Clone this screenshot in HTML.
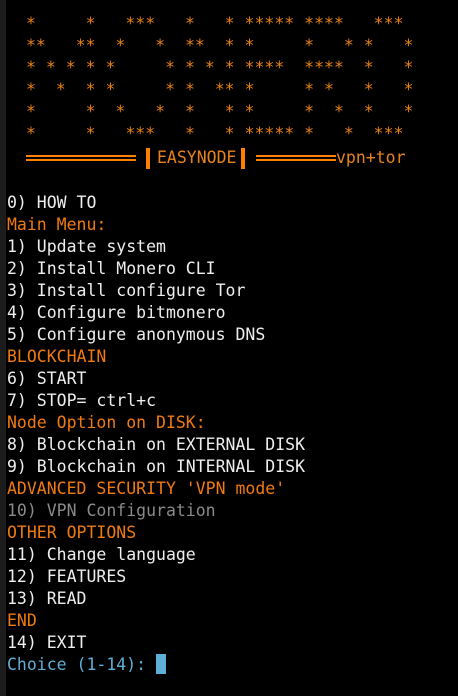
<!DOCTYPE html>
<html><head><meta charset="utf-8"><style>
body{margin:0;width:458px;height:696px;background:#000;overflow:hidden;position:relative;font-family:"DejaVu Sans Mono","Liberation Mono",monospace;font-size:16.5px;}
.strip{position:absolute;left:0;top:0;width:6px;height:696px;background:#1c1c1c}
pre{margin:0;font:inherit;line-height:22px;position:absolute;white-space:pre}
.o{color:#f07a10}.w{color:#eeeeee}.g{color:#8a8a8a}.b{color:#5fafd7}
.st{color:#e8820e}
.dl{position:absolute;height:2px;border-top:2px solid #ff8000;border-bottom:2px solid #ff8000;}
.bar{position:absolute;width:4px;height:21px;background:#ff8000;top:148px}
.cur{position:absolute;left:156px;top:654px;width:10px;height:20px;background:#5fafd7}
</style></head><body>
<div class="strip"></div>
<pre class="st" style="left:26px;top:13px">*     *   ***   *   * ***** ****   ***
**   **  *   *  **  * *     *   * *   *
* * * * *     * * * * ****  ****  *   *
*  *  * *     * *  ** *     * *   *   *
*     *  *   *  *   * *     *  *  *   *
*     *   ***   *   * ***** *   *  ***</pre>
<div class="dl" style="left:26px;top:155px;width:110px"></div>
<div class="bar" style="left:146px"></div>
<pre class="o" style="left:157px;top:147px;color:#e8821e">EASYNODE</pre>
<div class="bar" style="left:241px"></div>
<div class="dl" style="left:256px;top:155px;width:80px"></div>
<pre class="o" style="left:336px;top:147px;color:#e8821e">vpn+tor</pre>
<pre style="left:7px;top:192px"><span class="w">0) HOW TO</span>
<span class="o">Main Menu:</span>
<span class="w">1) Update system
2) Install Monero CLI
3) Install configure Tor
4) Configure bitmonero
5) Configure anonymous DNS</span>
<span class="o">BLOCKCHAIN</span>
<span class="w">6) START
7) STOP= ctrl+c</span>
<span class="o">Node Option on DISK:</span>
<span class="w">8) Blockchain on EXTERNAL DISK
9) Blockchain on INTERNAL DISK</span>
<span class="o">ADVANCED SECURITY 'VPN mode'</span>
<span class="g">10) VPN Configuration</span>
<span class="o">OTHER OPTIONS</span>
<span class="w">11) Change language
12) FEATURES
13) READ</span>
<span class="o">END</span>
<span class="w">14) EXIT</span>
<span class="b">Choice (1-14): </span></pre>
<div class="cur"></div>
</body></html>
